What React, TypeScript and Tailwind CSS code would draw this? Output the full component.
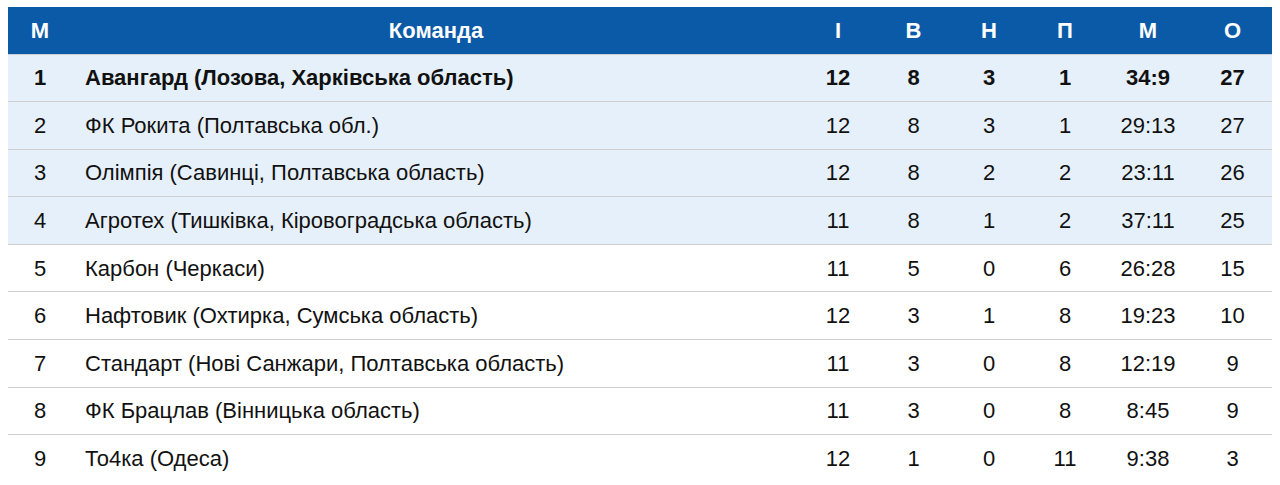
const rows = [
  ["1", "Авангард (Лозова, Харківська область)", "12", "8", "3", "1", "34:9", "27"],
  ["2", "ФК Рокита (Полтавська обл.)", "12", "8", "3", "1", "29:13", "27"],
  ["3", "Олімпія (Савинці, Полтавська область)", "12", "8", "2", "2", "23:11", "26"],
  ["4", "Агротех (Тишківка, Кіровоградська область)", "11", "8", "1", "2", "37:11", "25"],
  ["5", "Карбон (Черкаси)", "11", "5", "0", "6", "26:28", "15"],
  ["6", "Нафтовик (Охтирка, Сумська область)", "12", "3", "1", "8", "19:23", "10"],
  ["7", "Стандарт (Нові Санжари, Полтавська область)", "11", "3", "0", "8", "12:19", "9"],
  ["8", "ФК Брацлав (Вінницька область)", "11", "3", "0", "8", "8:45", "9"],
  ["9", "То4ка (Одеса)", "12", "1", "0", "11", "9:38", "3"],
];

const heads = ["М", "Команда", "І", "В", "Н", "П", "М", "О"];
const widths = ["w-[64px]", "w-[728px]", "w-[76px]", "w-[75px]", "w-[76px]", "w-[76px]", "w-[90px]", "w-[79px]"];

export default function App() {
  return (
    <div className="bg-white px-2 pt-[7px] font-['Liberation_Sans',Arial,sans-serif] text-[22px] text-[#111]">
      <table className="w-[1264px] table-fixed border-collapse">
        <thead>
          <tr className="h-[47px] bg-[#0b5aa7] text-white">
            {heads.map((h, i) => (
              <th key={i} className={`${widths[i]} text-center font-bold`}>{h}</th>
            ))}
          </tr>
        </thead>
        <tbody>
          {rows.map((r, ri) => (
            <tr
              key={ri}
              className={`h-[47.6px] border-t border-[#cfcfcf] ${ri < 4 ? "bg-[#e6f0fa]" : "bg-white"} ${ri === 0 ? "font-bold" : ""}`}
            >
              {r.map((c, ci) => (
                <td key={ci} className={ci === 1 ? "pl-[13px] text-left" : "text-center"}>{c}</td>
              ))}
            </tr>
          ))}
        </tbody>
      </table>
    </div>
  );
}
